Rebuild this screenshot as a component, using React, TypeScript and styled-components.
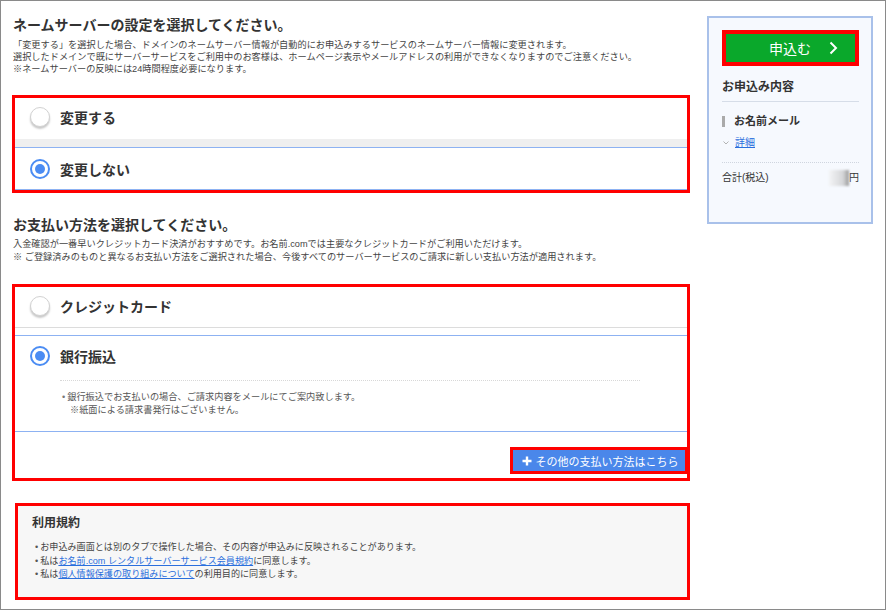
import React from 'react';
import styled, {createGlobalStyle} from 'styled-components';

const GlobalStyle = createGlobalStyle`
  html, body {
    margin: 0;
    padding: 0;
    background: #fff;
  }
  body {
    font-family: "Liberation Sans", "Noto Sans CJK JP", sans-serif;
    color: #333;
  }
  * {
    box-sizing: border-box;
  }
`;

const Frame = styled.div`
  width: 886px;
  height: 610px;
  border: 1px solid #8a8a8a;
  display: flex;
  align-items: flex-start;
  gap: 17px;
  padding-left: 11px;
`;

const Main = styled.main`
  width: 678px;
  padding-top: 14px;
  display: flex;
  flex-direction: column;
`;

const Heading = styled.h2<{$top?: number}>`
  margin: ${p => p.$top ?? 0}px 0 0;
  padding-left: 1px;
  font-size: 14px;
  line-height: 20px;
  font-weight: 700;
  color: #333;
`;

const Desc = styled.p<{$top: number; $lh: number}>`
  margin: ${p => p.$top}px 0 0;
  padding-left: 1px;
  font-size: 9.2px;
  line-height: ${p => p.$lh}px;
  color: #444;
  white-space: nowrap;
`;

// red annotation frame
const Highlight = styled.div<{$top?: number}>`
  border: 3px solid #ff0000;
  margin-top: ${p => p.$top ?? 0}px;
  display: flex;
  flex-direction: column;
`;

const Option = styled.div<{$selected?: boolean; $divided?: boolean}>`
  display: flex;
  flex-direction: column;
  background: #fff;
  border-top: ${p => (p.$selected ? '1px solid #8db2f2' : 'none')};
  border-bottom: ${p =>
    p.$selected ? '1px solid #8db2f2' : p.$divided ? '1px solid #dcdcdc' : 'none'};
`;

const OptionRow = styled.label<{$h: number; $pb?: number}>`
  height: ${p => p.$h}px;
  padding-bottom: ${p => p.$pb ?? 0}px;
  display: flex;
  align-items: center;
  gap: 10px;
  padding-left: 15px;
  font-size: 14px;
  font-weight: 700;
  color: #333;
  cursor: pointer;
`;

const Radio = styled.span<{$checked?: boolean}>`
  width: 20px;
  height: 20px;
  border-radius: 50%;
  background: #fff;
  display: flex;
  align-items: center;
  justify-content: center;
  flex-shrink: 0;
  border: ${p => (p.$checked ? '2px solid #4b8cf3' : '1px solid #d2d2d2')};
  box-shadow: ${p => (p.$checked ? 'none' : '0 2px 2px rgba(0,0,0,0.22)')};

  &::after {
    content: '';
    width: 10px;
    height: 10px;
    border-radius: 50%;
    background: ${p => (p.$checked ? '#4b8cf3' : 'transparent')};
  }
`;

const Band = styled.div<{$h: number; $grey?: boolean}>`
  height: ${p => p.$h}px;
  background: ${p => (p.$grey ? '#efefef' : '#fff')};
`;

const DottedRule = styled.div`
  margin: 4px 47px 0 45px;
  border-top: 1px dotted #d8d8d8;
`;

const Note = styled.div`
  padding: 10px 0 14px 47px;
  font-size: 9.2px;
  line-height: 13px;
  color: #555;
`;

const NoteLine = styled.div<{$indent?: boolean}>`
  padding-left: ${p => (p.$indent ? 6 : 0)}px;
  white-space: nowrap;

  &::before {
    content: ${p => (p.$indent ? "''" : "'•'")};
    color: #777;
    margin-right: 2px;
  }
`;

const ButtonArea = styled.div`
  display: flex;
  justify-content: flex-end;
  padding: 15px 0 4px;
`;

const ButtonMark = styled.div`
  border: 3px solid #ff0000;
  margin-right: -1px;
`;

const OtherButton = styled.button`
  width: 172px;
  height: 21px;
  border: none;
  background: #4a87ea;
  color: #fff;
  font-family: inherit;
  font-size: 11px;
  font-weight: 400;
  display: flex;
  align-items: center;
  justify-content: center;
  gap: 4px;
  padding: 0 0 0 2px;
  cursor: pointer;
`;

const Terms = styled.div`
  border: 3px solid #ff0000;
  margin: 22px 0 0 3px;
  width: 675px;
  height: 97px;
  background: #f7f7f7;
  padding: 8px 14px 0;
`;

const TermsTitle = styled.h3`
  margin: 0;
  font-size: 12px;
  line-height: 18px;
  font-weight: 700;
  color: #333;
`;

const TermsList = styled.ul`
  margin: 9px 0 0;
  padding: 0 0 0 3px;
  list-style: none;
  font-size: 9.1px;
  line-height: 13.5px;
  color: #444;
`;

const TermsItem = styled.li`
  white-space: nowrap;

  &::before {
    content: '•';
    margin-right: 2px;
    color: #555;
  }
`;

const Link = styled.a`
  color: #2b6fdd;
  text-decoration: underline;
`;

const Sidebar = styled.aside`
  margin-top: 15px;
  width: 166px;
  height: 208px;
  border: 2px solid #a9c1ea;
  background: #f6f9fe;
  padding: 12px 12px 0 13px;
  display: flex;
  flex-direction: column;
`;

const ApplyMark = styled.div`
  border: 4px solid #ff0000;
`;

const ApplyButton = styled.button`
  width: 100%;
  height: 28px;
  border: none;
  background: #0aa82b;
  color: #fff;
  font-family: inherit;
  font-size: 14px;
  display: grid;
  grid-template-columns: 1fr auto 1fr;
  align-items: center;
  padding: 0 17px 0 16px;
  cursor: pointer;
`;

const ApplyChevron = styled.svg`
  justify-self: end;
`;

const SideTitle = styled.div`
  margin-top: 12px;
  padding-bottom: 5px;
  border-bottom: 1px solid #d6dde8;
  font-size: 12px;
  line-height: 18px;
  font-weight: 700;
  color: #333;
`;

const Product = styled.div`
  margin-top: 11px;
  display: flex;
  align-items: center;
  gap: 9px;
  font-size: 11px;
  line-height: 16px;
  font-weight: 700;
  color: #333;

  &::before {
    content: '';
    width: 3px;
    height: 11px;
    background: #aaa;
  }
`;

const Detail = styled.div`
  margin-top: 7px;
  display: flex;
  align-items: center;
  gap: 6px;
  padding-left: 1px;
  font-size: 10px;
  line-height: 14px;
`;

const TotalRow = styled.div`
  margin-top: 12px;
  border-top: 1px dotted #cfd5df;
  padding-top: 7px;
  display: flex;
  align-items: center;
  justify-content: space-between;
  font-size: 10px;
  line-height: 14px;
  color: #333;
`;

const Price = styled.span`
  display: flex;
  align-items: center;
`;

const Blurred = styled.span`
  width: 20px;
  height: 16px;
  background: linear-gradient(90deg, #f3f4f6, #d5d6d8 70%, #9a9a9a);
  filter: blur(1px);
`;

export default function App() {
  return (
    <>
      <GlobalStyle />
      <Frame>
        <Main>
          <Heading>ネームサーバーの設定を選択してください。</Heading>
          <Desc $top={4} $lh={12}>
            「変更する」を選択した場合、ドメインのネームサーバー情報が自動的にお申込みするサービスのネームサーバー情報に変更されます。
            <br />
            選択したドメインで既にサーバーサービスをご利用中のお客様は、ホームページ表示やメールアドレスの利用ができなくなりますのでご注意ください。
            <br />
            ※ネームサーバーの反映には24時間程度必要になります。
          </Desc>

          <Highlight $top={20}>
            <Option>
              <OptionRow $h={41} $pb={3}>
                <Radio />
                変更する
              </OptionRow>
            </Option>
            <Band $h={8} $grey />
            <Option $selected>
              <OptionRow $h={41}>
                <Radio $checked />
                変更しない
              </OptionRow>
            </Option>
          </Highlight>

          <Heading $top={22}>お支払い方法を選択してください。</Heading>
          <Desc $top={3} $lh={13}>
            入金確認が一番早いクレジットカード決済がおすすめです。お名前.comでは主要なクレジットカードがご利用いただけます。
            <br />
            ※ ご登録済みのものと異なるお支払い方法をご選択された場合、今後すべてのサーバーサービスのご請求に新しい支払い方法が適用されます。
          </Desc>

          <Highlight $top={20}>
            <Option $divided>
              <OptionRow $h={40} $pb={3}>
                <Radio />
                クレジットカード
              </OptionRow>
            </Option>
            <Band $h={7} />
            <Option $selected>
              <OptionRow $h={40}>
                <Radio $checked />
                銀行振込
              </OptionRow>
              <DottedRule />
              <Note>
                <NoteLine>銀行振込でお支払いの場合、ご請求内容をメールにてご案内致します。</NoteLine>
                <NoteLine $indent>※紙面による請求書発行はございません。</NoteLine>
              </Note>
            </Option>
            <ButtonArea>
              <ButtonMark>
                <OtherButton>
                  <svg width="10" height="10" viewBox="0 0 10 10">
                    <path d="M5 0.5v9M0.5 5h9" stroke="#fff" strokeWidth="2.4" />
                  </svg>
                  その他の支払い方法はこちら
                </OtherButton>
              </ButtonMark>
            </ButtonArea>
          </Highlight>

          <Terms>
            <TermsTitle>利用規約</TermsTitle>
            <TermsList>
              <TermsItem>お申込み画面とは別のタブで操作した場合、その内容が申込みに反映されることがあります。</TermsItem>
              <TermsItem>
                私は<Link href="#">お名前.com レンタルサーバーサービス会員規約</Link>に同意します。
              </TermsItem>
              <TermsItem>
                私は<Link href="#">個人情報保護の取り組みについて</Link>の利用目的に同意します。
              </TermsItem>
            </TermsList>
          </Terms>
        </Main>

        <Sidebar>
          <ApplyMark>
            <ApplyButton>
              <span />
              <span>申込む</span>
              <ApplyChevron width="9" height="14" viewBox="0 0 9 14">
                <path d="M1.5 1.5l5.5 5.5-5.5 5.5" fill="none" stroke="#fff" strokeWidth="2" />
              </ApplyChevron>
            </ApplyButton>
          </ApplyMark>
          <SideTitle>お申込み内容</SideTitle>
          <Product>お名前メール</Product>
          <Detail>
            <svg width="6" height="4" viewBox="0 0 6 4">
              <path d="M0.5 0.5l2.5 2.5 2.5-2.5" fill="none" stroke="#aaa" strokeWidth="0.9" />
            </svg>
            <Link href="#">詳細</Link>
          </Detail>
          <TotalRow>
            <span>合計(税込)</span>
            <Price>
              <Blurred />
              円
            </Price>
          </TotalRow>
        </Sidebar>
      </Frame>
    </>
  );
}
